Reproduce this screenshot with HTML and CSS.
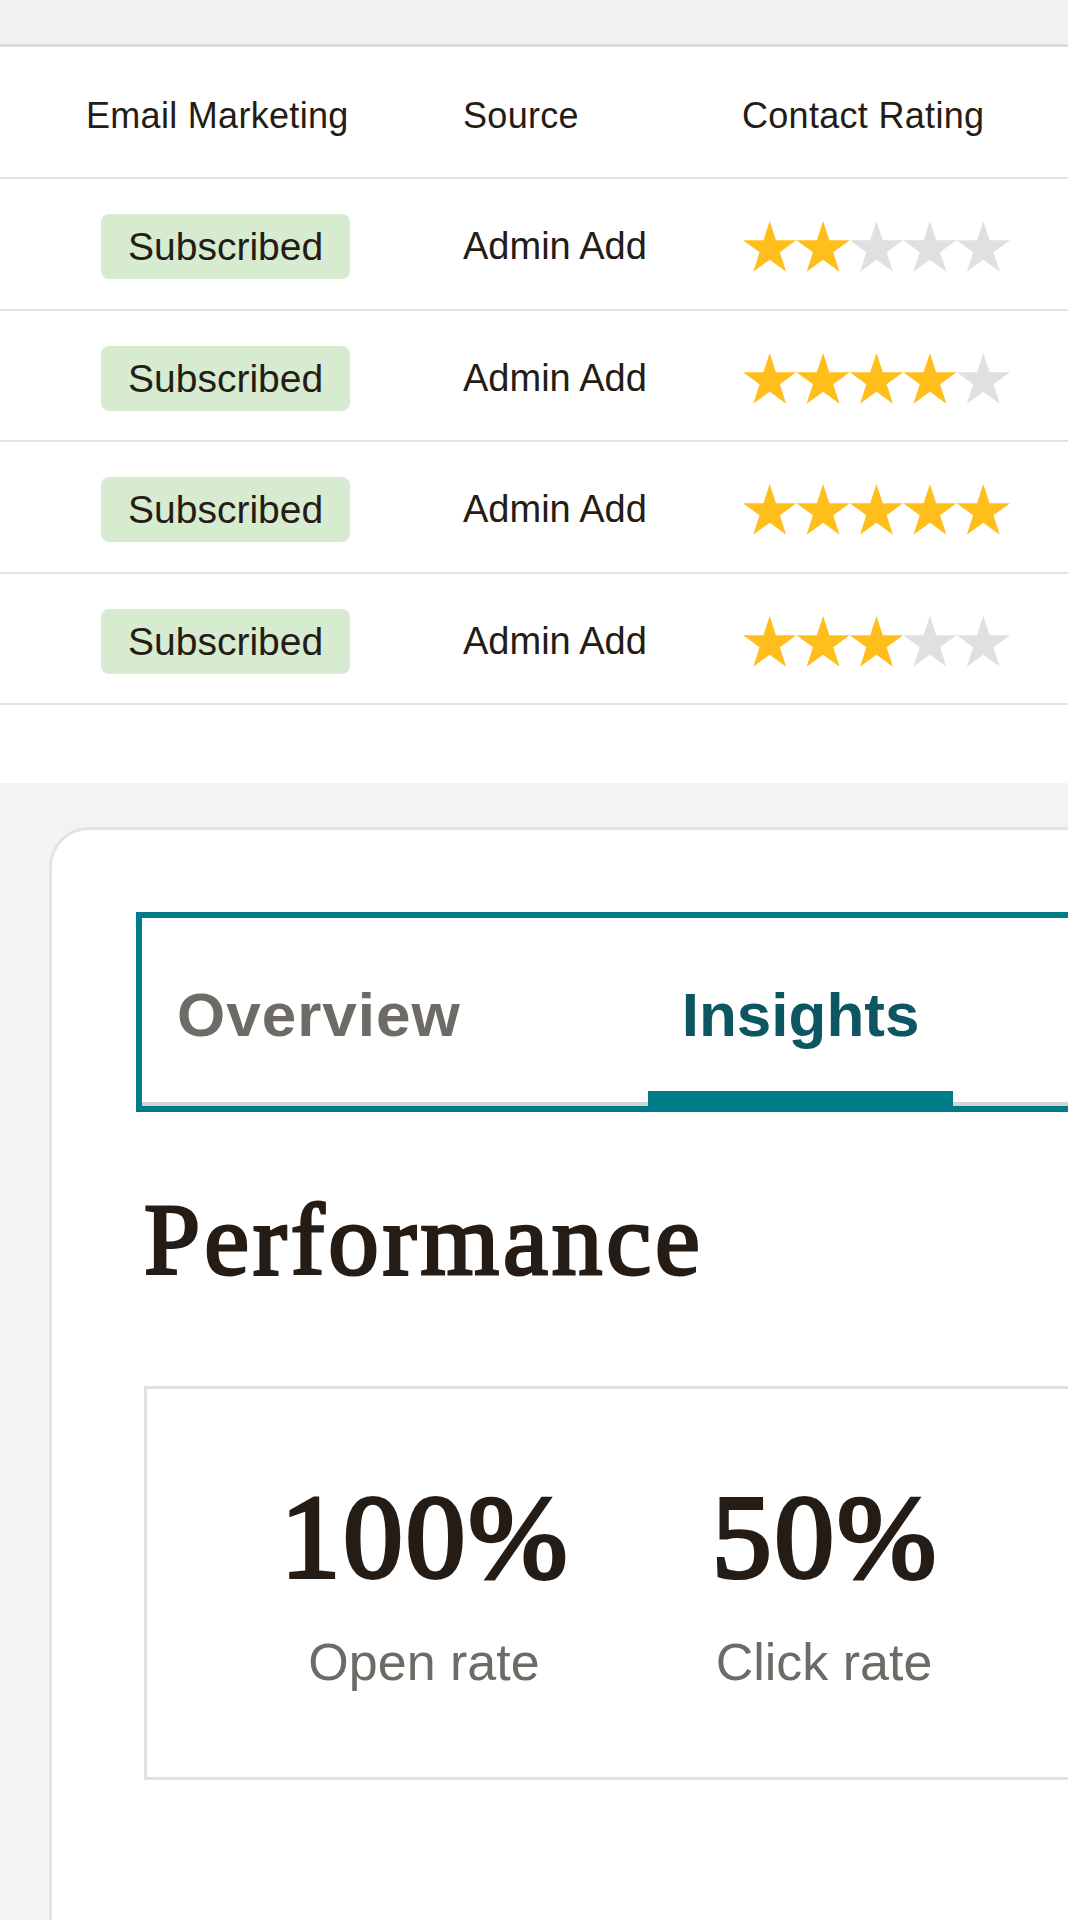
FILE: index.html
```html
<!DOCTYPE html>
<html lang="en">
<head>
<meta charset="utf-8">
<title>Contacts and report</title>
<link rel="stylesheet" href="styles.css">
</head>
<body>
<svg class="defs" width="0" height="0" aria-hidden="true">
  <defs>
    <path id="star" d="M26.7 0 L32.99 19.34 L53.33 19.35 L36.88 31.31 L43.16 50.65 L26.7 38.7 L10.24 50.65 L16.52 31.31 L0.07 19.35 L20.41 19.34Z"/>
  </defs>
</svg>
<div class="page">
  <div class="topbar"></div>
  <div class="table">
    <div class="trow thead">
      <div>Email Marketing</div>
      <div>Source</div>
      <div>Contact Rating</div>
    </div>
    <div class="trow">
      <div><span class="badge">Subscribed</span></div>
      <div>Admin Add</div>
      <div>
        <svg class="stars" viewBox="0 0 267 51">
          <use href="#star" class="on"/>
          <use href="#star" class="on" x="53.4"/>
          <use href="#star" class="off" x="106.8"/>
          <use href="#star" class="off" x="160.2"/>
          <use href="#star" class="off" x="213.6"/>
        </svg>
      </div>
    </div>
    <div class="trow">
      <div><span class="badge">Subscribed</span></div>
      <div>Admin Add</div>
      <div>
        <svg class="stars" viewBox="0 0 267 51">
          <use href="#star" class="on"/>
          <use href="#star" class="on" x="53.4"/>
          <use href="#star" class="on" x="106.8"/>
          <use href="#star" class="on" x="160.2"/>
          <use href="#star" class="off" x="213.6"/>
        </svg>
      </div>
    </div>
    <div class="trow">
      <div><span class="badge">Subscribed</span></div>
      <div>Admin Add</div>
      <div>
        <svg class="stars" viewBox="0 0 267 51">
          <use href="#star" class="on"/>
          <use href="#star" class="on" x="53.4"/>
          <use href="#star" class="on" x="106.8"/>
          <use href="#star" class="on" x="160.2"/>
          <use href="#star" class="on" x="213.6"/>
        </svg>
      </div>
    </div>
    <div class="trow">
      <div><span class="badge">Subscribed</span></div>
      <div>Admin Add</div>
      <div>
        <svg class="stars" viewBox="0 0 267 51">
          <use href="#star" class="on"/>
          <use href="#star" class="on" x="53.4"/>
          <use href="#star" class="on" x="106.8"/>
          <use href="#star" class="off" x="160.2"/>
          <use href="#star" class="off" x="213.6"/>
        </svg>
      </div>
    </div>
  </div>

  <section class="report">
    <div class="card">
      <div class="tabs">
        <div class="tablist">
          <div class="tab overview">Overview</div>
          <div class="tab active">Insights</div>
        </div>
      </div>
      <h2 class="title">Performance</h2>
      <div class="stats">
        <div class="stat">
          <div class="num">100%</div>
          <div class="label">Open rate</div>
        </div>
        <div class="stat">
          <div class="num">50%</div>
          <div class="label">Click rate</div>
        </div>
      </div>
    </div>
  </section>
</div>
</body>
</html>
```

FILE: styles.css
```css
html, body {
  margin: 0;
  padding: 0;
  background: #ffffff;
}

body {
  font-family: "Liberation Sans", Arial, sans-serif;
  color: #241c15;
}

.defs {
  position: absolute;
  width: 0;
  height: 0;
}

.page {
  width: 1068px;
  height: 1920px;
  overflow: hidden;
  display: flex;
  flex-direction: column;
  background: #ffffff;
}

.topbar {
  height: 44px;
  flex: none;
  background: #f2f2f2;
  border-bottom: 3px solid #dcdcdc;
}

.table {
  flex: none;
}

.trow {
  display: grid;
  grid-template-columns: 377px 279px 1fr;
  align-items: center;
  padding: 6px 0 0 86px;
  height: 123.5px;
  border-bottom: 2px solid #e2e2e2;
  font-size: 38px;
  color: #241c15;
}

.thead {
  padding-top: 8px;
  height: 122px;
  font-size: 36px;
  letter-spacing: 0.3px;
}

.badge {
  display: inline-block;
  margin-left: 15px;
  padding: 0 27px;
  height: 65px;
  line-height: 65px;
  font-size: 39px;
  letter-spacing: 0;
  background: #d7ebd0;
  border-radius: 8px;
}

.stars {
  display: block;
  width: 267px;
  height: 51px;
  margin-left: 1px;
}

.stars .on {
  fill: #ffbe1c;
}

.stars .off {
  fill: #e0e0e0;
}

.report {
  flex: 1;
  margin-top: 78px;
  background: #f3f3f2;
  padding: 44px 0 0 49px;
  display: flex;
}

.card {
  flex: 1;
  margin-right: -80px;
  background: #ffffff;
  border: 3px solid #e3e3e3;
  border-bottom: none;
  border-radius: 40px 40px 0 0;
  padding: 82px 0 0 92px;
}

.tabs {
  margin-left: -8px;
  border: 6px solid #007c89;
}

.tablist {
  display: flex;
  gap: 153px;
  border-bottom: 4px solid #d3d3d3;
}

.tab {
  position: relative;
  padding: 66px 34px 56px;
  font-size: 62px;
  line-height: 62px;
  font-weight: bold;
  color: #6e6b66;
}

.tab.overview {
  padding-left: 35px;
  letter-spacing: 1px;
}

.tab.active {
  color: #0b5661;
}

.tab.active::after {
  content: "";
  position: absolute;
  left: 0;
  right: 0;
  bottom: -4px;
  height: 15px;
  background: #007c89;
}

.title {
  margin: 78px 0 0;
  font-family: "Liberation Serif", "Times New Roman", serif;
  font-weight: normal;
  font-size: 101px;
  line-height: 100px;
  letter-spacing: 4px;
  -webkit-text-stroke: 3px #241c15;
  color: #241c15;
}

.stats {
  margin-top: 96px;
  border: 3px solid #e0e0e0;
  padding: 86px 0 89px 77px;
  display: grid;
  grid-template-columns: 400px 400px;
}

.stat {
  text-align: center;
}

.num {
  font-family: "Liberation Serif", "Times New Roman", serif;
  font-size: 119px;
  line-height: 124px;
  letter-spacing: 3px;
  text-indent: 3px;
  -webkit-text-stroke: 4px #241c15;
  color: #241c15;
}

.label {
  margin-top: 37px;
  font-size: 52px;
  line-height: 52px;
  color: #6e6b66;
}
```
